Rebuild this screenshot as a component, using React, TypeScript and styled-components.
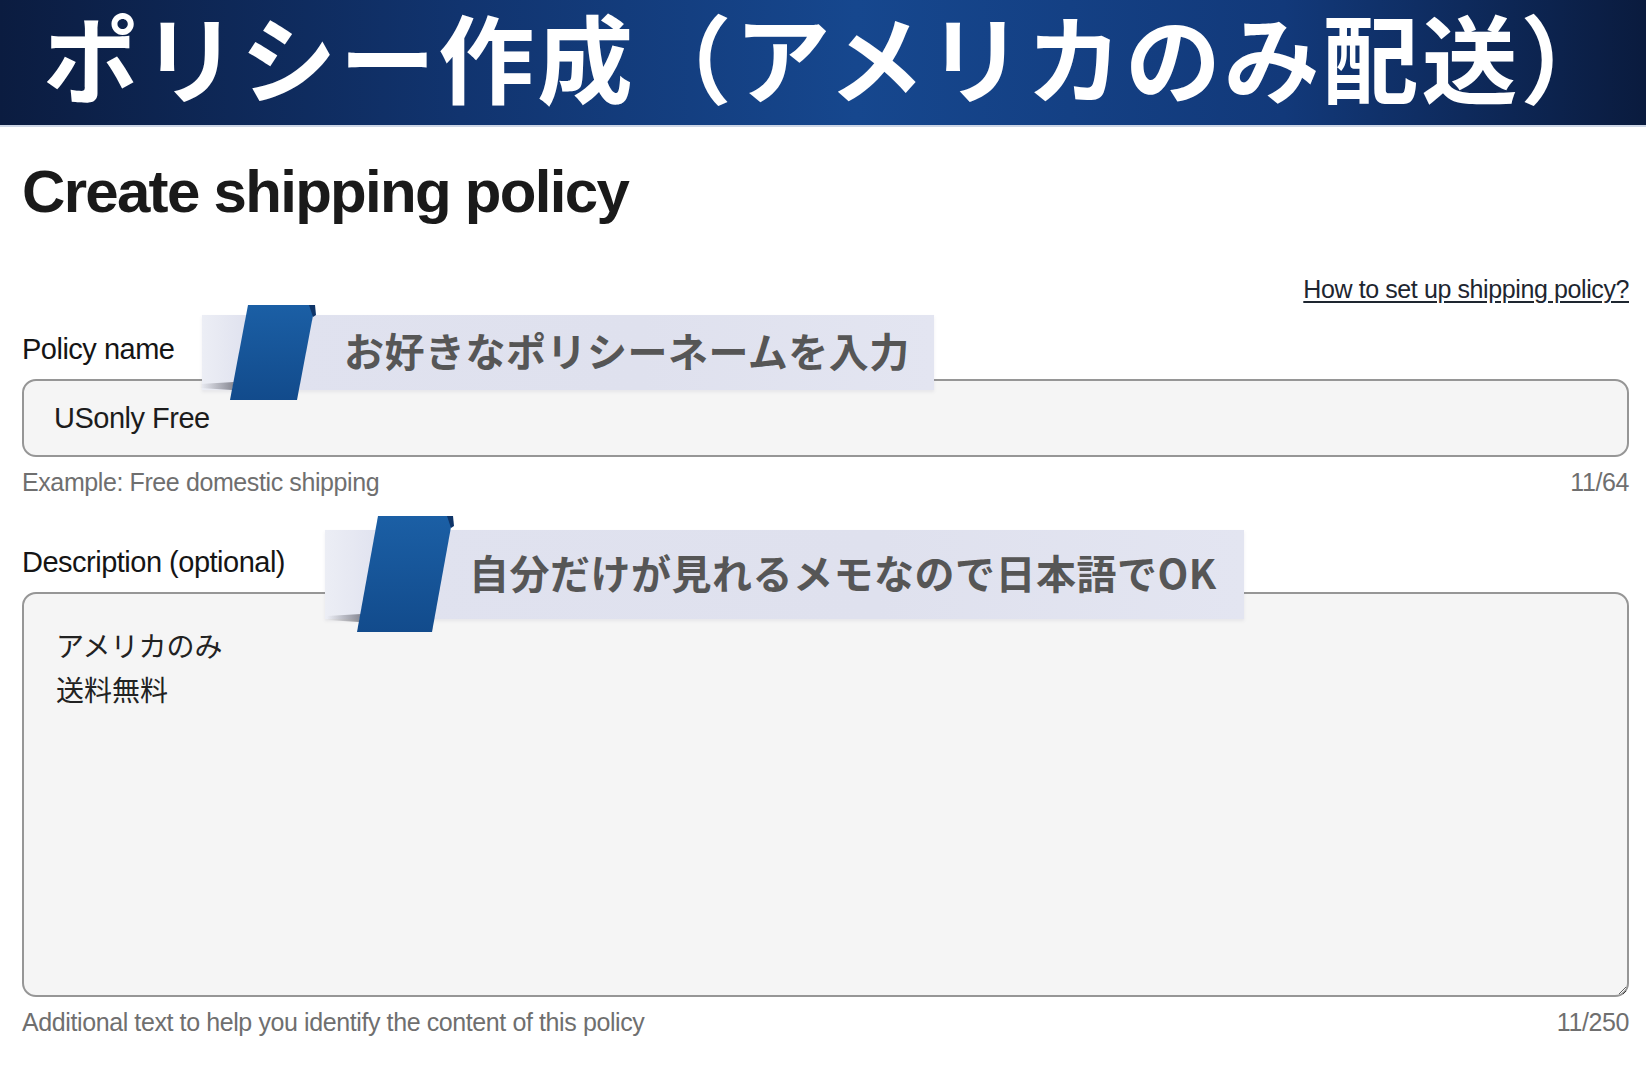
import React from "react";
import styled, { createGlobalStyle } from "styled-components";

const GlobalStyle = createGlobalStyle`
  html, body { margin: 0; padding: 0; background: #ffffff; }
  body { font-family: "Liberation Sans", Arial, sans-serif; }
  * { box-sizing: border-box; }
`;

const Page = styled.div`
  position: relative;
  width: 1646px;
  min-height: 1074px;
  background: #ffffff;
  overflow: hidden;
`;

const Banner = styled.header`
  border-bottom: 2px solid #cdd6e6;
  padding: 0 0 15px 43px;
  background: linear-gradient(
    90deg,
    #0b1c40 0%,
    #11346f 28%,
    #16478e 52%,
    #12397a 78%,
    #0a1b3e 100%
  );
`;

const BannerTitle = styled.h1`
  margin: 0;
  font-family: "Noto Sans CJK JP", "Noto Sans CJK SC", sans-serif;
  font-weight: 700;
  font-size: 96px;
  line-height: 110px;
  letter-spacing: 2.8px;
  color: #ffffff;
  white-space: nowrap;
`;

const Main = styled.main`
  display: flex;
  flex-direction: column;
  padding: 0 17px 0 22px;
`;

const Title = styled.h2`
  margin: 35px 0 0;
  font-size: 60px;
  line-height: 60px;
  font-weight: 700;
  letter-spacing: -1.7px;
  color: #1a1a1a;
`;

const LinkRow = styled.div`
  margin-top: 55px;
  display: flex;
  justify-content: flex-end;
`;

const HelpLink = styled.a`
  font-size: 25px;
  line-height: 25px;
  letter-spacing: -0.4px;
  color: #1e2630;
  text-decoration: underline;
  text-underline-offset: 3px;
  cursor: pointer;
`;

const Field = styled.section<{ $top: number }>`
  margin-top: ${(p) => p.$top}px;
  display: flex;
  flex-direction: column;
`;

const Label = styled.label`
  font-size: 29px;
  line-height: 29px;
  letter-spacing: -0.5px;
  color: #151515;
`;

const TextInput = styled.input`
  margin-top: 15px;
  height: 78px;
  width: 100%;
  padding: 0 0 0 30px;
  border: 2px solid #969696;
  border-radius: 14px;
  background: #f5f5f5;
  font-family: "Liberation Sans", Arial, sans-serif;
  font-size: 29px;
  letter-spacing: -0.5px;
  color: #1c1c1c;
  outline: none;
`;

const TextArea = styled.textarea`
  margin-top: 15px;
  height: 405px;
  width: 100%;
  padding: 29px 0 0 32px;
  border: 2px solid #969696;
  border-radius: 14px;
  background: #f5f5f5;
  font-family: "Noto Sans CJK JP", "Noto Sans CJK SC", sans-serif;
  font-weight: 400;
  font-size: 28px;
  line-height: 44px;
  color: #222222;
  outline: none;
  resize: vertical;
`;

const HelperRow = styled.div`
  margin-top: 13px;
  display: flex;
  justify-content: space-between;
  font-size: 25px;
  line-height: 25px;
  letter-spacing: -0.4px;
  color: #6f6f6f;
`;

const Callout = styled.div<{ $x: number; $y: number; $w: number; $h: number; $pad: number }>`
  position: absolute;
  left: ${(p) => p.$x}px;
  top: ${(p) => p.$y}px;
  width: ${(p) => p.$w}px;
  height: ${(p) => p.$h}px;
  padding-left: ${(p) => p.$pad}px;
  padding-bottom: 6px;
  display: flex;
  align-items: center;
  background: linear-gradient(90deg, #eceef5 0%, #e0e2ef 6%, #dfe1ee 60%, #e3e5f1 100%);
  box-shadow: 0 2px 3px rgba(120, 124, 150, 0.12);
`;

const CalloutText = styled.span`
  font-family: "Noto Sans CJK JP", "Noto Sans CJK SC", sans-serif;
  font-weight: 700;
  font-size: 40px;
  line-height: 1.2;
  letter-spacing: 0.5px;
  color: #565656;
  white-space: nowrap;
`;

const StripeSvg = styled.svg<{ $x: number; $y: number }>`
  position: absolute;
  left: ${(p) => p.$x}px;
  top: ${(p) => p.$y}px;
  overflow: visible;
`;

function Stripe({ x, y, w, h, slant, id }: { x: number; y: number; w: number; h: number; slant: number; id: string }) {
  return (
    <StripeSvg $x={x} $y={y} width={w} height={h} viewBox={`0 0 ${w} ${h}`}>
      <defs>
        <linearGradient id={`g-${id}`} x1="0" y1="0" x2="0" y2="1">
          <stop offset="0" stopColor="#1b5fa5" />
          <stop offset="1" stopColor="#124b8c" />
        </linearGradient>
        <linearGradient id={`s-${id}`} x1="1" y1="0" x2="0" y2="0">
          <stop offset="0" stopColor="rgba(60,60,70,0.55)" />
          <stop offset="1" stopColor="rgba(60,60,70,0)" />
        </linearGradient>
      </defs>
      <polygon points={`${-30},${h - 16} 4,${h - 18} 2,${h - 10} ${-30},${h - 12}`} fill={`url(#s-${id})`} />
      <polygon points={`${slant},0 ${w},0 ${w - slant},${h} 0,${h}`} fill={`url(#g-${id})`} />
      <polygon points={`${w - 6},0 ${w},0 ${w + 1},${10} ${w - 2},${12}`} fill="#0e3468" />
    </StripeSvg>
  );
}

export default function App() {
  return (
    <Page>
      <GlobalStyle />
      <Banner>
        <BannerTitle>ポリシー作成（アメリカのみ配送）</BannerTitle>
      </Banner>
      <Main>
        <Title>Create shipping policy</Title>
        <LinkRow>
          <HelpLink>How to set up shipping policy?</HelpLink>
        </LinkRow>
        <Field $top={33}>
          <Label>Policy name</Label>
          <TextInput defaultValue="USonly Free" />
          <HelperRow>
            <span>Example: Free domestic shipping</span>
            <span>11/64</span>
          </HelperRow>
        </Field>
        <Field $top={53}>
          <Label>Description (optional)</Label>
          <TextArea defaultValue={"アメリカのみ\n送料無料"} />
          <HelperRow>
            <span>Additional text to help you identify the content of this policy</span>
            <span>11/250</span>
          </HelperRow>
        </Field>
      </Main>

      <Callout $x={202} $y={315} $w={732} $h={75} $pad={142}>
        <Stripe id="a" x={28} y={-10} w={85} h={95} slant={18} />
        <CalloutText>お好きなポリシーネームを入力</CalloutText>
      </Callout>
      <Callout $x={325} $y={530} $w={919} $h={89} $pad={144}>
        <Stripe id="b" x={32} y={-14} w={96} h={116} slant={21} />
        <CalloutText>自分だけが見れるメモなので日本語でOK</CalloutText>
      </Callout>
    </Page>
  );
}
